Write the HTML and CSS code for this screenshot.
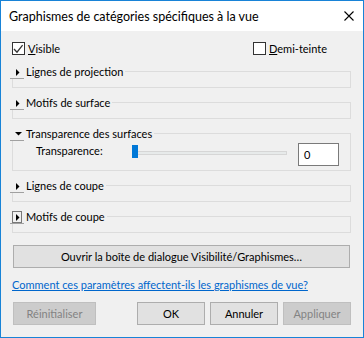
FILE: index.html
```html
<!DOCTYPE html>
<html lang="fr">
<head>
    <meta charset="UTF-8">
    <title>Graphismes de catégories spécifiques à la vue</title>
    <link rel="stylesheet" href="styles.css">
</head>
<body>
    <div class="window">
        <div class="titlebar">
            <span class="title">Graphismes de catégories spécifiques à la vue</span>
            <svg class="close" width="10" height="10" viewBox="0 0 10 10">
                <path d="M0.5 0.5L9.5 9.5M9.5 0.5L0.5 9.5" stroke="#000" stroke-width="1.1" fill="none"/>
            </svg>
        </div>

        <div class="content">
            <div class="check-row">
                <label class="check">
                    <span class="box">
                        <svg width="11" height="11" viewBox="0 0 11 11">
                            <path d="M1 6L4 9.2L9.6 2.2" stroke="#333" stroke-width="1.3" fill="none"/>
                        </svg>
                    </span>
                    <span><u>V</u>isible</span>
                </label>
                <label class="check">
                    <span class="box"></span>
                    <span><u>D</u>emi-teinte</span>
                </label>
            </div>

            <div class="groups">
                <div class="group">
                    <div class="group-head">
                        <span class="toggle">
                            <svg width="14" height="15" viewBox="0 0 14 15"><polygon points="6,5 9.5,8.5 6,12" fill="#000"/></svg>
                        </span>
                        <span class="group-title">Lignes de projection</span>
                    </div>
                </div>

                <div class="group">
                    <div class="group-head">
                        <span class="toggle">
                            <svg width="14" height="15" viewBox="0 0 14 15"><polygon points="6,5 9.5,8.5 6,12" fill="#000"/></svg>
                        </span>
                        <span class="group-title">Motifs de surface</span>
                    </div>
                </div>

                <div class="group open">
                    <div class="group-head">
                        <span class="toggle">
                            <svg width="14" height="15" viewBox="0 0 14 15"><polygon points="5,6 12,6 8.5,9.5" fill="#000"/></svg>
                        </span>
                        <span class="group-title">Transparence des surfaces</span>
                    </div>
                    <div class="group-body">
                        <span class="field-label">Transparence:</span>
                        <div class="slider">
                            <div class="track"></div>
                            <div class="thumb"></div>
                        </div>
                        <div class="num-input">0</div>
                    </div>
                </div>

                <div class="group">
                    <div class="group-head">
                        <span class="toggle">
                            <svg width="14" height="15" viewBox="0 0 14 15"><polygon points="6,5 9.5,8.5 6,12" fill="#000"/></svg>
                        </span>
                        <span class="group-title">Lignes de coupe</span>
                    </div>
                </div>

                <div class="group">
                    <div class="group-head">
                        <span class="toggle">
                            <svg width="14" height="15" viewBox="0 0 14 15">
                                <rect x="2.5" y="2.5" width="9" height="11" fill="none" stroke="#000" stroke-width="1" stroke-dasharray="1 1"/>
                                <polygon points="6,5 9.5,8.5 6,12" fill="#000"/>
                            </svg>
                        </span>
                        <span class="group-title">Motifs de coupe</span>
                    </div>
                </div>
            </div>

            <button class="btn btn-wide">Ouvrir la boîte de dialogue Visibilité/Graphismes…</button>

            <a class="help-link" href="#">Comment ces paramètres affectent-ils les graphismes de vue?</a>

            <div class="footer">
                <button class="btn btn-reset" disabled>Réinitialiser</button>
                <div class="footer-right">
                    <button class="btn">OK</button>
                    <button class="btn">Annuler</button>
                    <button class="btn" disabled>Appliquer</button>
                </div>
            </div>
        </div>
    </div>
</body>
</html>
```

FILE: styles.css
```css
* {
    box-sizing: border-box;
}

body {
    margin: 0;
    background: #ffffff;
    font-family: Lato, "Liberation Sans", sans-serif;
    font-size: 11px;
    color: #000;
}

.window {
    width: 364px;
    height: 338px;
    border: 1px solid #1883d7;
    background: #f0f0f0;
    display: flex;
    flex-direction: column;
}

.titlebar {
    height: 30px;
    background: #ffffff;
    display: flex;
    align-items: center;
    justify-content: space-between;
    padding: 0 9px 0 8px;
}

.title {
    font-size: 12.5px;
}

.content {
    padding: 0 12px 0 11px;
    display: flex;
    flex-direction: column;
}

/* cases a cocher */
.check-row {
    display: grid;
    grid-template-columns: 241px auto;
    margin-top: 11px;
    height: 13px;
}

.check {
    display: flex;
    align-items: center;
    gap: 3px;
    line-height: 13px;
}

.box {
    width: 13px;
    height: 13px;
    border: 1px solid #333;
    background: #fff;
    display: flex;
}

/* groupes repliables */
.groups {
    display: flex;
    flex-direction: column;
    gap: 14px;
    margin-top: 16px;
}

.group {
    border: 1px solid #dcdcdc;
    padding-bottom: 8px;
}

.group.open {
    padding-bottom: 4px;
}

.group-head {
    display: flex;
    align-items: center;
    height: 15px;
    margin: -8px 0 0 -3px;
}

.toggle {
    width: 14px;
    height: 15px;
    border-bottom: 1px solid #a0a0a0;
    background: #f0f0f0;
    display: flex;
}

.group-title {
    background: #f0f0f0;
    padding: 0 2px;
    line-height: 15px;
}

.group-body {
    display: flex;
    align-items: flex-start;
    margin-top: 2px;
    height: 23px;
    padding-left: 23px;
}

.field-label {
    width: 96px;
    margin-top: 1px;
}

.slider {
    position: relative;
    width: 155px;
    height: 14px;
    margin-top: 2px;
}

.track {
    margin-top: 6px;
    height: 4px;
    background: #e7eaea;
    border: 1px solid #d6d6d6;
}

.thumb {
    position: absolute;
    left: 0;
    top: 0;
    width: 6px;
    height: 13px;
    background: #0078d7;
}

.num-input {
    width: 41px;
    height: 23px;
    margin-left: 11px;
    border: 1px solid #7a7a7a;
    background: #fff;
    padding: 0 0 0 5px;
    line-height: 21px;
}

/* boutons */
.btn {
    font-family: inherit;
    font-size: 11px;
    height: 23px;
    padding: 0;
    background: #e1e1e1;
    border: 1px solid #adadad;
    color: #000;
}

.btn:disabled {
    background: #cccccc;
    border-color: #bfbfbf;
    color: #838383;
}

.btn-wide {
    margin: 12px 1px 0 1px;
}

.help-link {
    margin-top: 10px;
    color: #0066cc;
    line-height: 14px;
    align-self: flex-start;
}

.footer {
    display: flex;
    justify-content: space-between;
    margin-top: 10px;
    padding-left: 1px;
}

.btn-reset {
    width: 83px;
}

.footer-right {
    display: flex;
    gap: 5px;
}

.footer-right .btn {
    width: 68px;
}
```
